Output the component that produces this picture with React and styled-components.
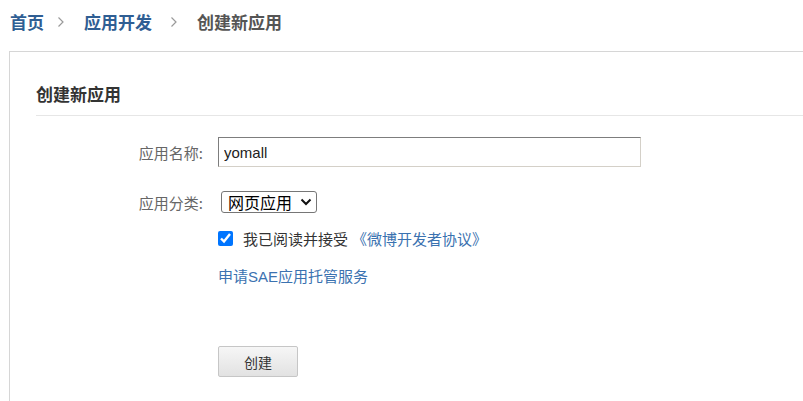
import React from "react";
import styled, { createGlobalStyle } from "styled-components";

const Global = createGlobalStyle`
  html, body { margin: 0; padding: 0; background: #fff; }
  body { font-family: "Liberation Sans", "Noto Sans CJK SC", sans-serif; color: #333; overflow: hidden; }
`;

const Page = styled.div`
  width: 803px;
  height: 401px;
  overflow: hidden;
`;

const Breadcrumb = styled.nav`
  display: flex;
  align-items: center;
  height: 51px;
  padding: 0 0 0 10px;
  box-sizing: border-box;
  font-size: 17px;
  font-weight: bold;
  font-family: "Noto Sans CJK SC", sans-serif;
`;

const Crumb = styled.a`
  color: ${(p) => (p.$current ? "#555" : "#2f5e93")};
  text-decoration: none;
  line-height: 22px;
  margin-top: -7px;
`;

const Sep = styled.span`
  display: inline-flex;
  margin: -7px 19px 0 ${(p) => p.$ml || 13}px;
`;

const Panel = styled.section`
  margin-left: 9px;
  border-top: 1px solid #d6d6d6;
  border-left: 1px solid #d6d6d6;
  padding-left: 26px;
  height: 360px;
`;

const Heading = styled.h2`
  margin: 0;
  padding: 30px 0 9px;
  line-height: 24px;
  font-size: 17px;
  font-weight: bold;
  color: #333;
  font-family: "Noto Sans CJK SC", sans-serif;
  border-bottom: 1px solid #e6e6e6;
`;

const Form = styled.form`
  display: flex;
  flex-direction: column;
  padding-top: 21px;
`;

const Row = styled.div`
  display: flex;
  align-items: center;
  height: ${(p) => p.$h}px;
  margin-top: ${(p) => p.$mt || 0}px;
  padding-left: ${(p) => (p.$indent ? 182 : 0)}px;
`;

const Label = styled.label`
  width: 167px;
  margin-right: 15px;
  text-align: right;
  font-size: 15px;
  color: #666;
  font-family: "Noto Sans CJK SC", sans-serif;
`;

const TextInput = styled.input`
  box-sizing: border-box;
  width: 423px;
  height: 30px;
  padding: 0 0 0 5px;
  border-style: solid;
  border-width: 1px;
  border-color: #7d7d7d #d4d0c8 #d4d0c8 #7d7d7d;
  font-size: 15px;
  font-family: "Liberation Sans", sans-serif;
  color: #222;
  outline: none;
`;

const SelectWrap = styled.div`
  position: relative;
  margin-left: 3px;
  display: inline-flex;
`;

const Select = styled.select`
  appearance: none;
  box-sizing: border-box;
  width: 96px;
  height: 22px;
  padding: 0 0 0 6px;
  font-size: 16px;
  line-height: 20px;
  font-family: "Noto Sans CJK SC", sans-serif;
  color: #000;
  border: 1px solid #767676;
  border-radius: 3px;
  background: #fff;
`;

const SelectArrow = styled.svg`
  position: absolute;
  right: 5px;
  top: 7px;
  pointer-events: none;
`;

const Check = styled.input`
  width: 15px;
  height: 15px;
  margin: 0 10px 0 0;
  accent-color: #0075ff;
`;

const Text = styled.span`
  font-size: 15px;
  color: #333;
  font-family: "Noto Sans CJK SC", sans-serif;
`;

const Link = styled.a`
  font-size: 15px;
  color: #3b72b0;
  text-decoration: none;
  font-family: "Liberation Sans", "Noto Sans CJK SC", sans-serif;
  margin-left: ${(p) => p.$ml || 0}px;
`;

const Button = styled.button`
  width: 80px;
  height: 31px;
  border: 1px solid #c6c6c6;
  border-radius: 2px;
  background: linear-gradient(#f6f6f6, #e2e2e2);
  font-size: 14px;
  color: #333;
  font-family: "Noto Sans CJK SC", sans-serif;
  padding: 0;
`;

const Chevron = () => (
  <svg width="8" height="12" viewBox="0 0 8 12">
    <path d="M1.5 1.5 L6 6 L1.5 10.5" fill="none" stroke="#9a9a9a" strokeWidth="1.2" />
  </svg>
);

export default function App() {
  return (
    <Page>
      <Global />
      <Breadcrumb>
        <Crumb href="#">首页</Crumb>
        <Sep><Chevron /></Sep>
        <Crumb href="#">应用开发</Crumb>
        <Sep $ml={18}><Chevron /></Sep>
        <Crumb $current>创建新应用</Crumb>
      </Breadcrumb>
      <Panel>
        <Heading>创建新应用</Heading>
        <Form onSubmit={(e) => e.preventDefault()}>
          <Row $h={30}>
            <Label>应用名称:</Label>
            <TextInput defaultValue="yomall" />
          </Row>
          <Row $h={22} $mt={24}>
            <Label>应用分类:</Label>
            <SelectWrap>
              <Select defaultValue="web">
                <option value="web">网页应用</option>
              </Select>
              <SelectArrow width="12" height="8" viewBox="0 0 12 8">
                <path d="M1.5 1.5 L6 6 L10.5 1.5" fill="none" stroke="#111" strokeWidth="2" />
              </SelectArrow>
            </SelectWrap>
          </Row>
          <Row $h={20} $mt={15} $indent>
            <Check type="checkbox" defaultChecked />
            <Text>我已阅读并接受</Text>
            <Link href="#" $ml={4}>《微博开发者协议》</Link>
          </Row>
          <Row $h={20} $mt={17} $indent>
            <Link href="#">申请SAE应用托管服务</Link>
          </Row>
          <Row $h={31} $mt={61} $indent>
            <Button type="submit">创建</Button>
          </Row>
        </Form>
      </Panel>
    </Page>
  );
}
